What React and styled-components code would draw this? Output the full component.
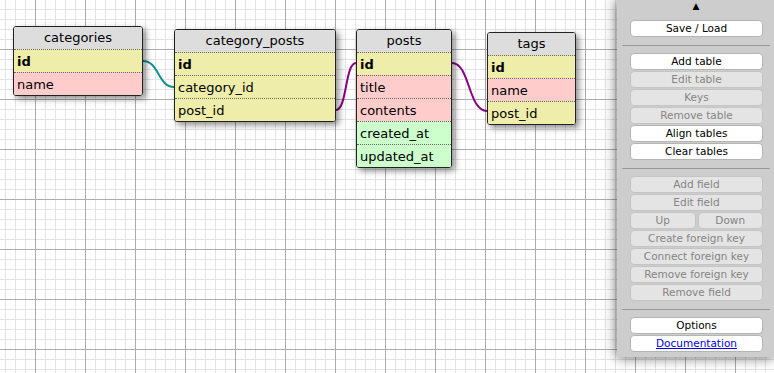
import React from 'react';
import styled, { createGlobalStyle } from 'styled-components';

const tables = [
  {
    name: 'categories',
    left: 13,
    top: 26,
    width: 130,
    fields: [
      { name: 'id', kind: 'key', pk: true },
      { name: 'name', kind: 'text' },
    ],
  },
  {
    name: 'category_posts',
    left: 174,
    top: 29,
    width: 162,
    fields: [
      { name: 'id', kind: 'key', pk: true },
      { name: 'category_id', kind: 'key' },
      { name: 'post_id', kind: 'key' },
    ],
  },
  {
    name: 'posts',
    left: 356,
    top: 29,
    width: 96,
    fields: [
      { name: 'id', kind: 'key', pk: true },
      { name: 'title', kind: 'text' },
      { name: 'contents', kind: 'text' },
      { name: 'created_at', kind: 'date' },
      { name: 'updated_at', kind: 'date' },
    ],
  },
  {
    name: 'tags',
    left: 487,
    top: 32,
    width: 89,
    fields: [
      { name: 'id', kind: 'key', pk: true },
      { name: 'name', kind: 'text' },
      { name: 'post_id', kind: 'key' },
    ],
  },
];

const rowColors = {
  key: '#eeeeaa',
  text: '#ffcccc',
  date: '#ccffcc',
};

function App() {
  return (
    <>
      <GlobalStyle />
      <Canvas>
        <Links width='774' height='373'>
          <path d='M143 61 C159 61, 158 87, 174 87' stroke='#119090' />
          <path d='M336 110 C347 110, 345 63, 356 63' stroke='#880088' />
          <path d='M452 63 C470 63, 468 111, 487 111' stroke='#880088' />
        </Links>

        {tables.map(t => (
          <Table key={t.name} $left={t.left} $top={t.top} $width={t.width}>
            <TableHeader>{t.name}</TableHeader>
            {t.fields.map(f => (
              <Field key={f.name} $kind={f.kind} $pk={f.pk}>
                {f.name}
              </Field>
            ))}
          </Table>
        ))}

        <Bar>
          <Toggle>▲</Toggle>
          <Button>Save / Load</Button>
          <Separator />
          <Button>Add table</Button>
          <Button disabled>Edit table</Button>
          <Button disabled>Keys</Button>
          <Button disabled>Remove table</Button>
          <Button>Align tables</Button>
          <Button>Clear tables</Button>
          <Separator />
          <Button disabled>Add field</Button>
          <Button disabled>Edit field</Button>
          <Pair>
            <Button disabled>Up</Button>
            <Button disabled>Down</Button>
          </Pair>
          <Button disabled>Create foreign key</Button>
          <Button disabled>Connect foreign key</Button>
          <Button disabled>Remove foreign key</Button>
          <Button disabled>Remove field</Button>
          <Separator />
          <Button>Options</Button>
          <Button>
            <DocLink>Documentation</DocLink>
          </Button>
        </Bar>
      </Canvas>
    </>
  );
}

const GlobalStyle = createGlobalStyle`
  html, body {
    margin: 0;
    padding: 0;
    overflow: hidden;
  }
`;

// grid paper: thin lines every 10px, darker lines every 50px
const Canvas = styled.div`
  position: relative;
  width: 774px;
  height: 373px;
  overflow: hidden;
  background-color: #fff;
  background-image:
    linear-gradient(to right, #acacac 1px, transparent 1px),
    linear-gradient(to bottom, #acacac 1px, transparent 1px),
    linear-gradient(to right, #e3e3e3 1px, transparent 1px),
    linear-gradient(to bottom, #e3e3e3 1px, transparent 1px);
  background-size: 50px 50px, 50px 50px, 10px 10px, 10px 10px;
  background-position: 35px 0, 0 49px, 5px 0, 0 9px;
  font-family: 'DejaVu Sans', Verdana, sans-serif;
`;

const Links = styled.svg`
  position: absolute;
  left: 0;
  top: 0;
  fill: none;
  stroke-width: 2;

  path {
    fill: none;
  }
`;

const Table = styled.div`
  position: absolute;
  left: ${p => p.$left}px;
  top: ${p => p.$top}px;
  width: ${p => p.$width}px;
  box-sizing: border-box;
  border: 1px solid #222;
  border-radius: 3px;
  overflow: hidden;
  box-shadow: 3px 3px 6px rgba(0, 0, 0, 0.45);
  font-size: 13px;
  color: #000;
`;

const TableHeader = styled.div`
  height: 22px;
  line-height: 22px;
  text-align: center;
  background: #dddddd;
`;

const Field = styled.div`
  height: 22px;
  line-height: 23px;
  padding-left: 3px;
  border-top: 1px dotted #666;
  background: ${p => rowColors[p.$kind]};
  font-weight: ${p => (p.$pk ? 'bold' : 'normal')};
  white-space: nowrap;
`;

const Bar = styled.div`
  position: absolute;
  top: 0;
  left: 617px;
  right: 0;
  display: flex;
  flex-direction: column;
  gap: 1px;
  padding: 0 4px 5px 5px;
  background: #cdcdcd;
  box-shadow: 0 0 12px rgba(0, 0, 0, 0.65);
  font-size: 10.5px;
`;

const Toggle = styled.div`
  height: 19px;
  line-height: 12px;
  text-align: center;
  font-size: 9px;
  color: #000;
`;

const Button = styled.div`
  height: 17px;
  line-height: 15px;
  box-sizing: border-box;
  margin: 0 7px 0 8px;
  border: 1px solid ${p => (p.disabled ? '#c4c4c4' : '#b4b4b4')};
  border-radius: 4px;
  background: ${p => (p.disabled ? '#e4e4e4' : '#fff')};
  color: ${p => (p.disabled ? '#858585' : '#000')};
  text-align: center;
  white-space: nowrap;
`;

const Pair = styled.div`
  display: flex;
  gap: 2px;
  margin: 0 7px 0 8px;

  ${Button} {
    flex: 1;
    margin: 0;
  }
`;

const Separator = styled.div`
  flex: none;
  height: 1px;
  margin: 7px 0 6px;
  background: #9a9a9a;
`;

const DocLink = styled.span`
  color: #0000ee;
  text-decoration: underline;
`;

export default App;
